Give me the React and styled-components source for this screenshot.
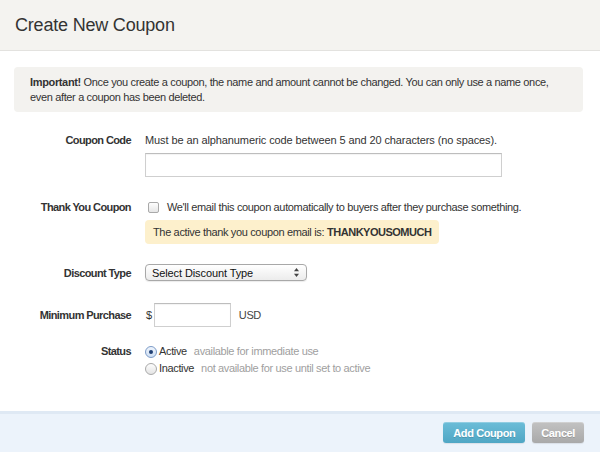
import React from 'react';
import styled, { createGlobalStyle } from 'styled-components';

const GlobalStyle = createGlobalStyle`
  html, body {
    margin: 0;
    padding: 0;
    background: #fff;
  }
  body {
    font-family: "Liberation Sans", Arial, Helvetica, sans-serif;
    font-size: 11px;
    letter-spacing: -0.35px;
    color: #333;
  }
`;

const Page = styled.div`
  height: 452px;
  display: flex;
  flex-direction: column;
  overflow: hidden;
`;

const Header = styled.div`
  flex-shrink: 0;
  height: 50px;
  display: flex;
  align-items: center;
  padding-left: 15px;
  background: #f4f3f0;
  border-bottom: 1px solid #e3e2df;
`;

const Title = styled.h1`
  margin: 0;
  font-size: 18px;
  font-weight: normal;
  color: #333;
  letter-spacing: -0.2px;
`;

const Alert = styled.div`
  margin: 16px 17px 0 14px;
  padding: 8px 16px 7px;
  background: #f3f2ef;
  border-radius: 4px;
  line-height: 15px;
  color: #333;
  white-space: nowrap;
`;

const Form = styled.div`
  margin-top: 21px;
`;

const Row = styled.div`
  display: grid;
  grid-template-columns: 131px 1fr;
  column-gap: 14px;
  align-items: ${p => (p.$center ? 'center' : 'start')};
  margin-top: ${p => p.$top || 0}px;
  line-height: ${p => p.$lh || 14}px;
`;

const Label = styled.div`
  text-align: right;
  font-weight: bold;
  letter-spacing: -0.6px;
  color: #333;
`;

const Field = styled.div`
  display: flex;
  flex-direction: column;
  align-items: flex-start;
`;

const Hint = styled.span`
  letter-spacing: -0.1px;
`;

const Inline = styled.div`
  display: flex;
  align-items: center;
  gap: ${p => p.$gap || 0}px;
`;

const TextInput = styled.div`
  box-sizing: border-box;
  width: ${p => p.$w}px;
  height: 24px;
  margin-top: ${p => p.$mt || 0}px;
  border: 1px solid #cfcfcf;
  border-top-color: #bdbdbd;
  box-shadow: inset 0 1px 1px rgba(0, 0, 0, 0.05);
  background: #fff;
`;

const Checkbox = styled.span`
  box-sizing: border-box;
  width: 11px;
  height: 11px;
  margin-left: 3px;
  margin-right: 8px;
  border: 1px solid #a9a9a9;
  border-radius: 2px;
  background: linear-gradient(#fdfdfd, #e6e6e6);
`;

const Notice = styled.div`
  margin-top: 6px;
  height: 24px;
  padding: 0 8px;
  display: flex;
  align-items: center;
  background: #fdf0cc;
  border-radius: 4px;
  color: #333;

  b {
    margin-left: 3px;
    letter-spacing: -0.5px;
  }
`;

const Select = styled.div`
  box-sizing: border-box;
  width: 162px;
  height: 17px;
  padding: 0 6px;
  display: flex;
  align-items: center;
  justify-content: space-between;
  border: 1px solid #a8a8a8;
  border-radius: 4px;
  background: linear-gradient(#ffffff, #ececec);
  box-shadow: 0 1px 1px rgba(0, 0, 0, 0.08);
  color: #111;
  font-size: 11px;
  letter-spacing: -0.1px;
`;

const Arrows = styled.svg`
  width: 5px;
  height: 9px;
  margin-right: 1px;
`;

const Dollar = styled.span`
  margin-left: 1px;
  color: #333;
`;

const Unit = styled.span`
  margin-left: 6px;
  color: #444;
`;

const Option = styled.div`
  display: flex;
  align-items: center;
`;

const Radio = styled.span`
  box-sizing: border-box;
  width: 12px;
  height: 12px;
  margin-right: 2px;
  border-radius: 50%;
  border: 1px solid ${p => (p.$on ? '#7d9cc8' : '#a9a9a9')};
  background: ${p => (p.$on ? 'linear-gradient(#eef4fc, #cfdff3)' : 'linear-gradient(#fdfdfd, #e4e4e4)')};
  display: flex;
  align-items: center;
  justify-content: center;

  &::after {
    content: '';
    display: ${p => (p.$on ? 'block' : 'none')};
    width: 4px;
    height: 4px;
    border-radius: 50%;
    background: #1f3f73;
  }
`;

const OptionName = styled.span`
  color: #333;
  margin-right: 7px;
`;

const Muted = styled.span`
  color: #a0a0a0;
`;

const Footer = styled.div`
  flex-shrink: 0;
  margin-top: auto;
  box-sizing: border-box;
  height: 41px;
  border-top: 3px solid #dfe9f4;
  background: #ecf3fb;
  display: flex;
  justify-content: flex-end;
  align-items: flex-start;
  gap: 7px;
  padding: 8px 16px 0 0;
`;

const Button = styled.button`
  height: 21px;
  padding: 0 ${p => p.$px || 10}px;
  border: none;
  border-radius: 3px;
  font-family: "Liberation Sans", Arial, sans-serif;
  font-size: 11px;
  font-weight: bold;
  letter-spacing: -0.4px;
  color: #fff;
  text-shadow: 0 1px 0 rgba(0, 0, 0, 0.15);
  background: ${p =>
    p.$primary
      ? 'linear-gradient(#6cbdd8, #4fa6c4)'
      : 'linear-gradient(#c2c2c2, #a9a9a9)'};
  box-shadow: inset 0 1px 0 rgba(255, 255, 255, 0.25), 0 1px 1px rgba(0, 0, 0, 0.08);
`;

const App = () => (
  <Page>
    <GlobalStyle />
    <Header>
      <Title>Create New Coupon</Title>
    </Header>

    <Alert>
      <b>Important!</b> Once you create a coupon, the name and amount cannot be changed. You can only use a name once,
      <br />
      even after a coupon has been deleted.
    </Alert>

    <Form>
      <Row>
        <Label>Coupon Code</Label>
        <Field>
          <Hint>Must be an alphanumeric code between 5 and 20 characters (no spaces).</Hint>
          <TextInput $w={357} $mt={6} />
        </Field>
      </Row>

      <Row $top={23}>
        <Label>Thank You Coupon</Label>
        <Field>
          <Inline>
            <Checkbox />
            <span>We'll email this coupon automatically to buyers after they purchase something.</span>
          </Inline>
          <Notice>
            The active thank you coupon email is: <b>THANKYOUSOMUCH</b>
          </Notice>
        </Field>
      </Row>

      <Row $top={20} $center>
        <Label>Discount Type</Label>
        <Field>
          <Select>
            <span>Select Discount Type</span>
            <Arrows viewBox="0 0 5 9">
              <path d="M2.5 0 L5 3.2 L0 3.2 Z" fill="#444" />
              <path d="M2.5 9 L5 5.8 L0 5.8 Z" fill="#444" />
            </Arrows>
          </Select>
        </Field>
      </Row>

      <Row $top={22} $center>
        <Label>Minimum Purchase</Label>
        <Inline $gap={2}>
          <Dollar>$</Dollar>
          <TextInput $w={77} />
          <Unit>USD</Unit>
        </Inline>
      </Row>

      <Row $top={16} $lh={17}>
        <Label>Status</Label>
        <Field>
          <Option>
            <Radio $on />
            <OptionName>Active</OptionName>
            <Muted>available for immediate use</Muted>
          </Option>
          <Option>
            <Radio />
            <OptionName>Inactive</OptionName>
            <Muted>not available for use until set to active</Muted>
          </Option>
        </Field>
      </Row>
    </Form>

    <Footer>
      <Button $primary $px={10}>Add Coupon</Button>
      <Button $px={9}>Cancel</Button>
    </Footer>
  </Page>
);

export default App;
